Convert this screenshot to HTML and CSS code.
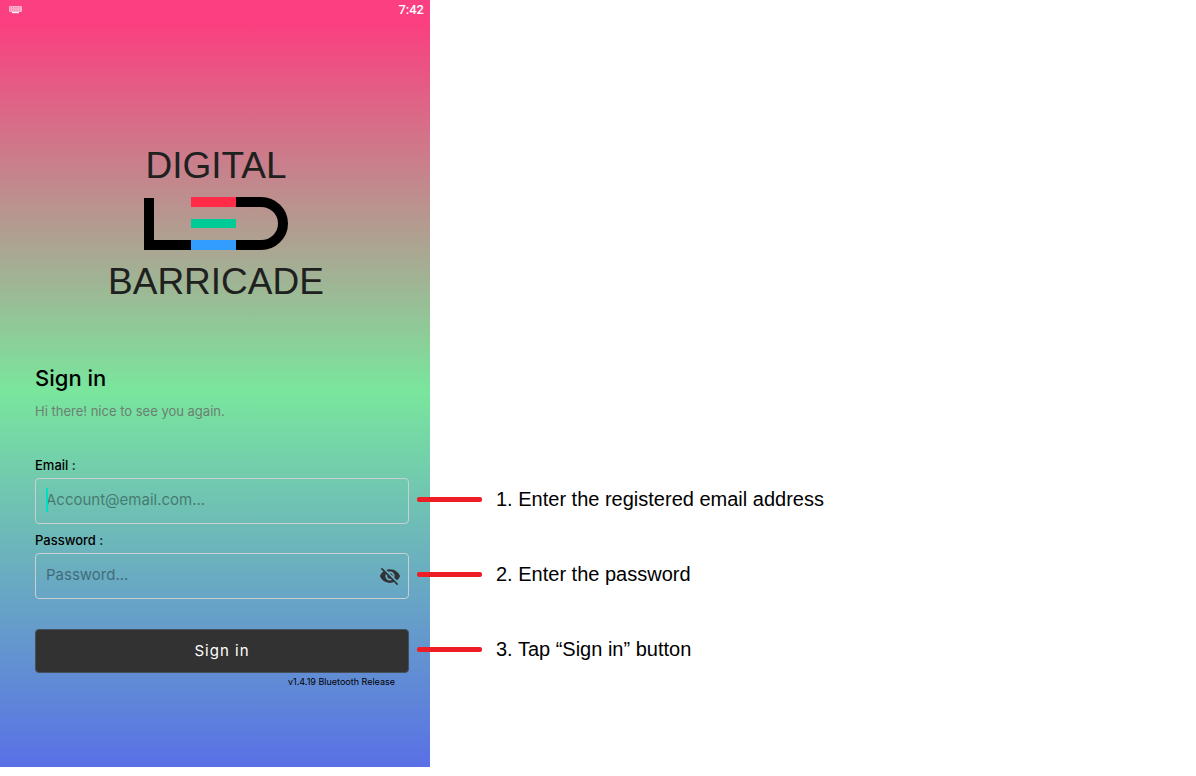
FILE: index.html
```html
<!DOCTYPE html>
<html lang="en">
<head>
<meta charset="utf-8">
<meta name="viewport" content="width=device-width, initial-scale=1">
<title>Digital LED Barricade - Sign in</title>
<link rel="stylesheet" href="styles.css">
</head>
<body>
<main class="phone">
  <header class="status">
    <svg class="keyboard" viewBox="0 0 14 8" aria-hidden="true">
      <rect x="1" y="0" width="13" height="6" rx="1" fill="#fff" fill-opacity=".6"/>
      <path d="M2 1.800h11M2 4h11" stroke="#f9407f" stroke-width="1" stroke-opacity=".7" stroke-dasharray="1 1.200"/>
      <path d="M4 6.600h7" stroke="#fff" stroke-width="1.200"/>
    </svg>
    <time>7:42</time>
  </header>
  <div class="logo">
    <span class="logo-text">DIGITAL</span>
    <svg class="logo-led" viewBox="0 0 144 53" role="img" aria-label="LED">
      <path d="M0 1h10v42h37v10H0z" fill="#000"/>
      <path d="M92 5h25a22 21.500 0 0 1 0 43H92" fill="none" stroke="#000" stroke-width="10"/>
      <path d="M47 0h45v10H47z" fill="#ff2b47"/>
      <path d="M47 22h45v9H47z" fill="#00cb97"/>
      <path d="M47 43h45v10H47z" fill="#339dff"/>
    </svg>
    <span class="logo-text">BARRICADE</span>
  </div>
  <form class="form">
    <h1 class="title">Sign in</h1>
    <p class="greeting">Hi there! nice to see you again.</p>
    <label class="label" for="email">Email :</label>
    <div class="row">
      <input class="field" id="email" type="email" placeholder="Account@email.com...">
      <span class="caret"></span>
      <p class="callout"><span class="line"></span>1. Enter the registered email address</p>
    </div>
    <label class="label" for="password">Password :</label>
    <div class="row">
      <input class="field" id="password" type="password" placeholder="Password...">
      <button class="reveal" type="button" aria-label="Show password">
        <svg viewBox="0 0 24 24" aria-hidden="true"><path fill="#303236" d="M12 7c2.760 0 5 2.240 5 5 0 .650-.130 1.260-.360 1.830l2.920 2.920c1.510-1.260 2.700-2.890 3.430-4.750-1.730-4.390-6-7.500-11-7.500-1.400 0-2.740.250-3.980.700l2.160 2.160C10.740 7.130 11.350 7 12 7zM2 4.270l2.280 2.280.460.460C3.080 8.300 1.780 10.020 1 12c1.730 4.390 6 7.500 11 7.500 1.550 0 3.030-.300 4.380-.840l.420.420L19.730 22 21 20.730 3.270 3 2 4.270zM7.530 9.800l1.550 1.550c-.050.210-.080.430-.080.650 0 1.660 1.340 3 3 3 .220 0 .440-.030.650-.080l1.550 1.550c-.670.330-1.410.530-2.200.530-2.760 0-5-2.240-5-5 0-.790.200-1.530.530-2.200zm4.310-.780l3.150 3.150.020-.160c0-1.660-1.340-3-3-3l-.170.010z"/></svg>
      </button>
      <p class="callout"><span class="line"></span>2. Enter the password</p>
    </div>
    <div class="row submit-row">
      <button class="submit" type="submit">Sign in</button>
      <p class="callout"><span class="line"></span>3. Tap “Sign in” button</p>
    </div>
    <p class="version">v1.4.19 Bluetooth Release</p>
  </form>
</main>
</body>
</html>
```
FILE: styles.css
```css
* { box-sizing: border-box; }
body { margin: 0; background: #fff; color: #000; font-family: Inter, "Open Sans", sans-serif; }
h1, p { margin: 0; }

.phone {
  width: 100%;
  max-width: 430px;
  min-height: calc(100vh - 9px);
  background: linear-gradient(#fb3f80 3%, #79e69d 51%, #5970e6);
}

.status {
  display: flex;
  align-items: center;
  justify-content: space-between;
  height: 20px;
  padding: 0 6px 0 8px;
  color: #fff;
  font: 500 13px/20px Roboto, sans-serif;
}
.keyboard { width: 14px; height: 8px; }

.logo {
  display: flex;
  flex-direction: column;
  align-items: center;
  padding: 124px 0 0 2px;
  color: #1f211f;
  font-family: "Liberation Sans", Arial, sans-serif;
}
.logo-text { font-size: 37px; line-height: 44px; }
.logo-led { width: 144px; height: 53px; margin: 9px 0 10px; }

.form { padding: 60px 21px 0 35px; }
.title { font-size: 22px; font-weight: 500; line-height: 28px; }
.greeting { margin-top: 9px; color: #6b7f72; font-size: 13px; line-height: 20px; }
.label { display: block; margin-top: 6px; font-size: 13px; font-weight: 500; line-height: 20px; }
.greeting + .label { margin-top: 34px; }

.row { position: relative; margin-top: 3px; }
.field {
  display: block;
  width: 100%;
  height: 46px;
  padding: 0 44px 4px 10px;
  border: 1px solid #cbcfd0;
  border-radius: 4px;
  background: transparent;
  color: #000;
  font: 15px/20px Inter, sans-serif;
}
.field::placeholder { color: #000; opacity: .38; }
.caret { position: absolute; top: 10px; left: 11px; width: 2px; height: 24px; background: #00dec4; }
.reveal {
  position: absolute;
  top: 12px;
  right: 8px;
  width: 22px;
  height: 22px;
  padding: 0;
  border: 0;
  background: none;
}
.reveal svg { display: block; width: 22px; height: 22px; }

.submit-row { margin-top: 30px; }
.submit {
  display: block;
  width: 100%;
  height: 44px;
  border: 1px solid #45505c;
  border-radius: 4px;
  background: #323232;
  color: #fff;
  font: 15px/20px Inter, sans-serif;
  letter-spacing: 1px;
}
.version { padding-right: 14px; font-size: 9px; line-height: 18px; text-align: right; }

.callout {
  position: absolute;
  top: 50%;
  left: calc(100% + 8px);
  display: flex;
  align-items: center;
  gap: 14px;
  height: 24px;
  margin-top: -14px;
  font: 20px/24px "Liberation Sans", Arial, sans-serif;
  white-space: nowrap;
}
.line { width: 65px; height: 5px; border-radius: 2px; background: #ee1c25; }
```
